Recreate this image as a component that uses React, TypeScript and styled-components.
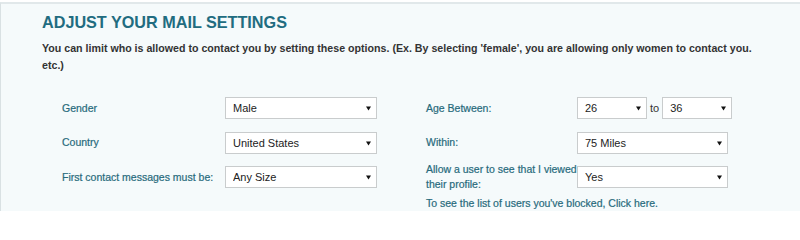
import React from "react";
import styled, { createGlobalStyle } from "styled-components";

const GlobalStyle = createGlobalStyle`
  html, body {
    margin: 0;
    padding: 0;
    background: #ffffff;
  }
  body {
    font-family: "Liberation Sans", Arial, sans-serif;
  }
`;

const Page = styled.div`
  padding-top: 2px;
`;

const Panel = styled.section`
  height: 207px;
  padding: 0 41px;
  background: #f5fafb;
  border-top: 2px solid #e1e8ea;
  border-left: 1px solid #d9e1e3;
`;

const Title = styled.h2`
  margin: 0;
  padding-top: 8px;
  font-size: 16.2px;
  line-height: 20px;
  font-weight: bold;
  color: #216c80;
  text-transform: uppercase;
`;

const Intro = styled.p`
  margin: 7.5px 0 0;
  font-size: 10.65px;
  line-height: 17px;
  font-weight: bold;
  color: #333333;
`;

const Form = styled.div`
  display: flex;
  gap: 49px;
  margin-top: 23.5px;
  padding-left: 20px;
`;

const Column = styled.div<{ $label: number }>`
  display: grid;
  grid-template-columns: ${(p) => p.$label}px auto;
  grid-auto-rows: 22px;
  row-gap: 12.5px;
  align-items: center;
`;

const Side = styled.div`
  display: flex;
  flex-direction: column;
`;

const Label = styled.label`
  font-size: 10.5px;
  line-height: 15px;
  color: #276a7b;
  white-space: nowrap;
  -webkit-text-stroke: 0.2px #276a7b;
`;

const Field = styled.div`
  display: flex;
  align-items: center;
  gap: 3px;
`;

const SelectBox = styled.div<{ $width: number }>`
  position: relative;
  width: ${(p) => p.$width}px;
  height: 22px;
`;

const Select = styled.select`
  appearance: none;
  -webkit-appearance: none;
  width: 100%;
  height: 100%;
  margin: 0;
  padding: 0 14px 0 7px;
  border: 1px solid #c9cccd;
  border-radius: 0;
  background: #ffffff;
  font-family: "Liberation Sans", Arial, sans-serif;
  font-size: 11px;
  color: #222222;
  outline: none;
`;

const Arrow = styled.svg`
  position: absolute;
  right: 6px;
  top: 9px;
  width: 5px;
  height: 5px;
  pointer-events: none;
`;

const To = styled.span`
  font-size: 11px;
  color: #333333;
`;

const Note = styled.a`
  margin-top: 8px;
  font-size: 10.5px;
  line-height: 15px;
  color: #276a7b;
  -webkit-text-stroke: 0.2px #276a7b;
  text-decoration: none;
  cursor: pointer;
`;

type DropProps = { width: number; value: string; options: string[] };

const Dropdown = ({ width, value, options }: DropProps) => (
  <SelectBox $width={width}>
    <Select defaultValue={value}>
      {options.map((o) => (
        <option key={o}>{o}</option>
      ))}
    </Select>
    <Arrow viewBox="0 0 5 5">
      <path d="M0 0.5 L5 0.5 L2.5 4.5 Z" fill="#111" />
    </Arrow>
  </SelectBox>
);

const ages = Array.from({ length: 82 }, (_, i) => String(18 + i));

const App = () => {
  return (
    <Page>
      <GlobalStyle />
      <Panel>
        <Title>Adjust Your Mail Settings</Title>
        <Intro>
          You can limit who is allowed to contact you by setting these options. (Ex. By
          selecting 'female', you are allowing only women to contact you. etc.)
        </Intro>
        <Form>
          <Column $label={163}>
            <Label>Gender</Label>
            <Dropdown width={152} value="Male" options={["Male", "Female"]} />
            <Label>Country</Label>
            <Dropdown
              width={152}
              value="United States"
              options={["United States", "Canada", "United Kingdom"]}
            />
            <Label>First contact messages must be:</Label>
            <Dropdown
              width={152}
              value="Any Size"
              options={["Any Size", "At least 50 characters", "At least 100 characters"]}
            />
          </Column>
          <Side>
            <Column $label={151}>
              <Label>Age Between:</Label>
              <Field>
                <Dropdown width={70} value="26" options={ages} />
                <To>to</To>
                <Dropdown width={70} value="36" options={ages} />
              </Field>
              <Label>Within:</Label>
              <Dropdown
                width={151}
                value="75 Miles"
                options={["25 Miles", "50 Miles", "75 Miles", "100 Miles"]}
              />
              <Label>
                Allow a user to see that I viewed
                <br />
                their profile:
              </Label>
              <Dropdown width={151} value="Yes" options={["Yes", "No"]} />
            </Column>
            <Note>To see the list of users you've blocked, Click here.</Note>
          </Side>
        </Form>
      </Panel>
    </Page>
  );
};

export default App;
